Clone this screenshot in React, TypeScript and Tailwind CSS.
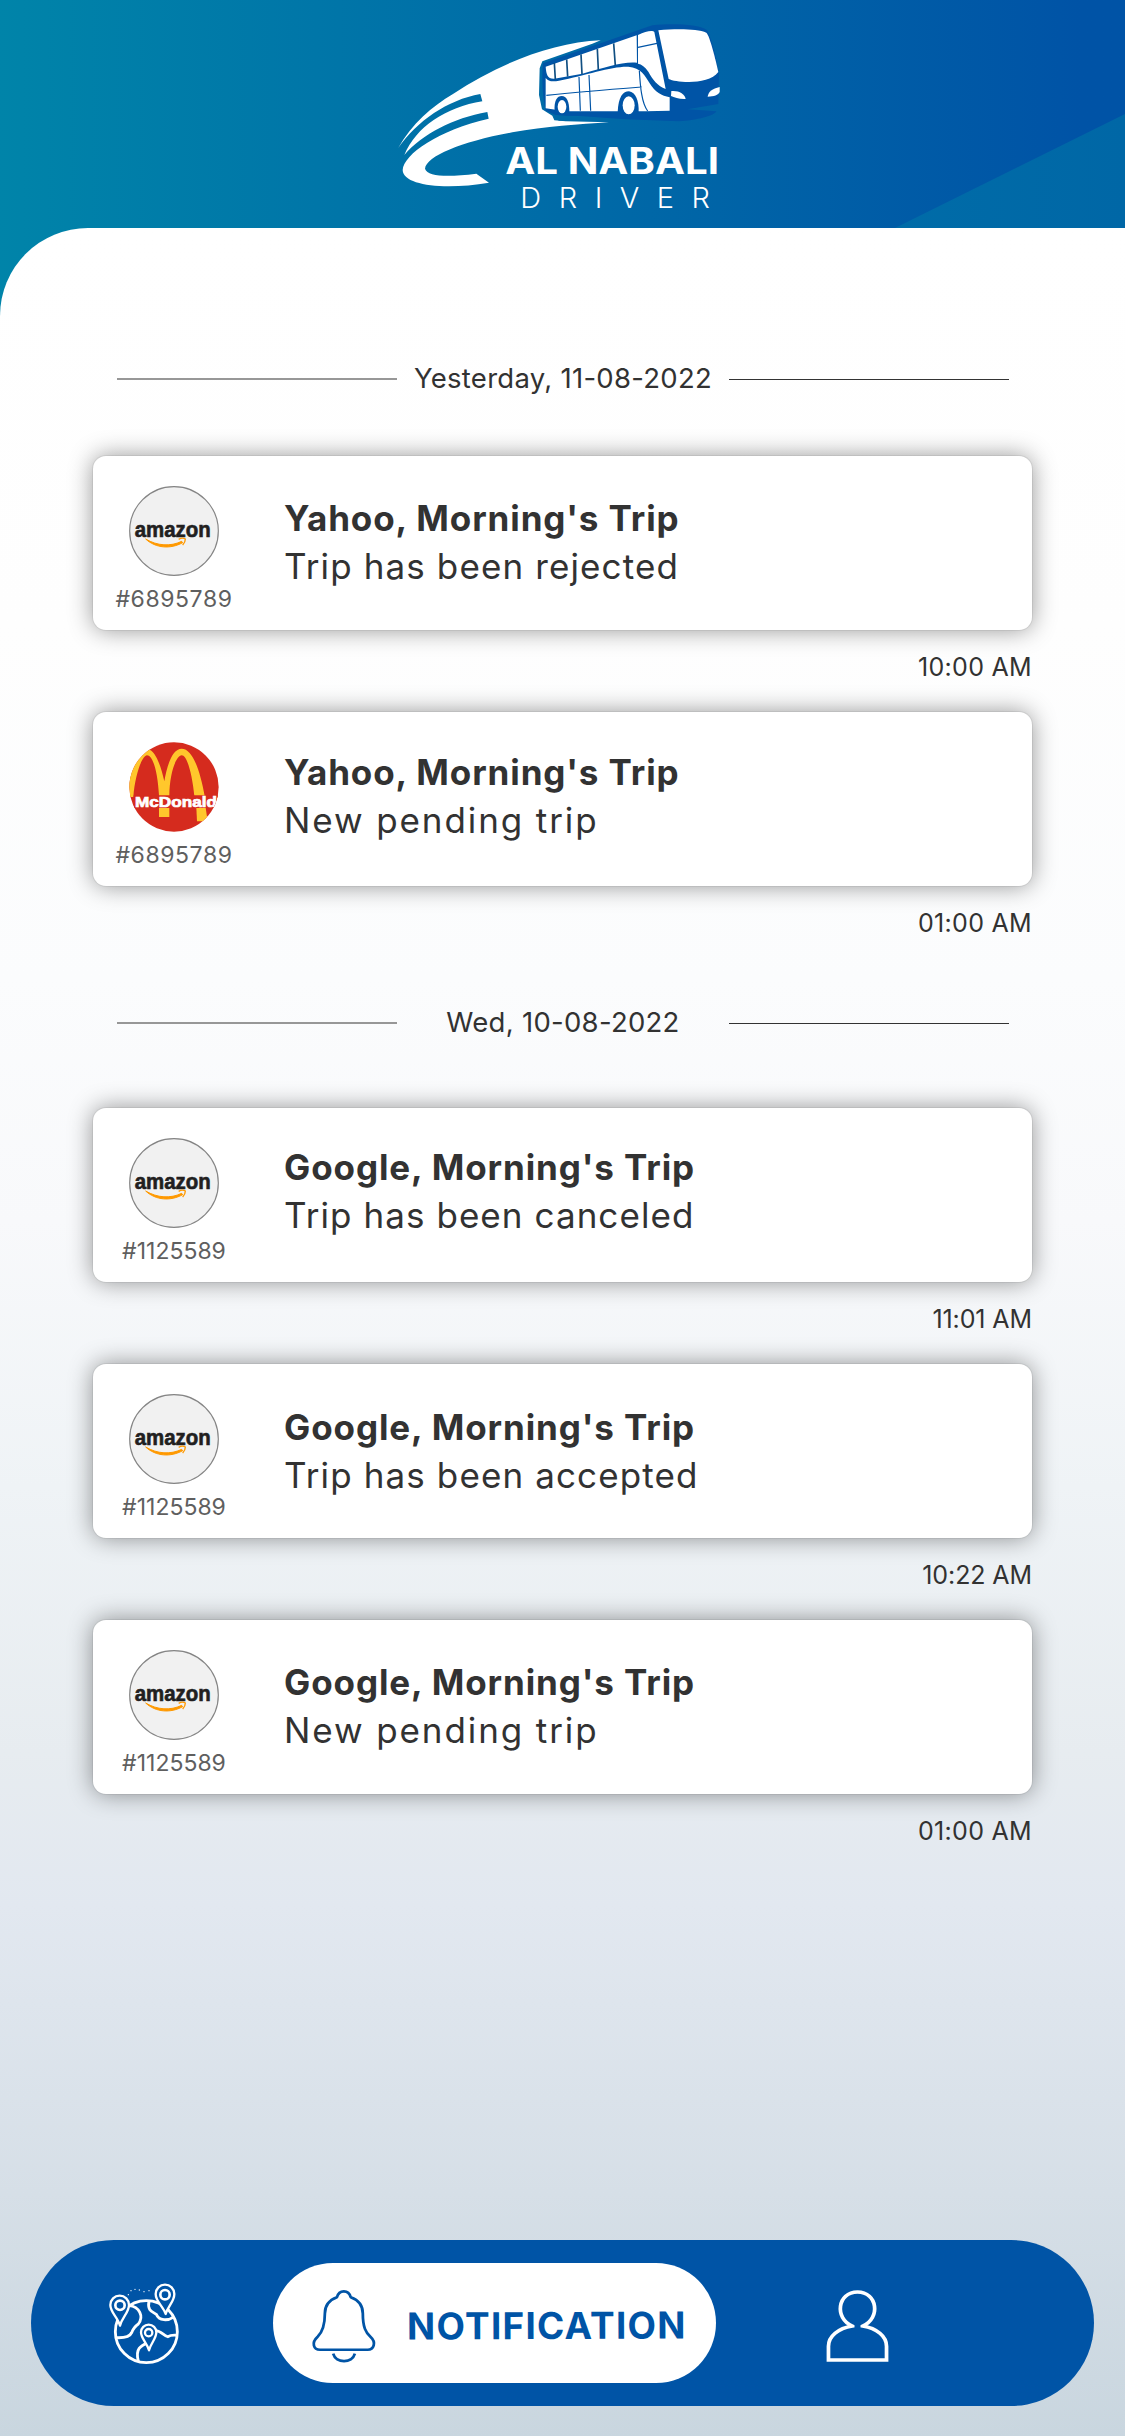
type Brand = "amazon" | "mcdonald";

interface Trip {
  brand: Brand;
  id: string;
  idClass: string;
  company: string;
  message: string;
  messageClass: string;
  padClass: string;
  time: string;
  timeClass: string;
}

const yesterday: Trip[] = [
  {
    brand: "amazon",
    id: "#6895789",
    idClass: "tracking-[0.57px]",
    company: "Yahoo",
    message: "Trip has been rejected",
    messageClass: "tracking-[1.12px]",
    padClass: "pt-[38px]",
    time: "10:00 AM",
    timeClass: "tracking-[0.3px]",
  },
  {
    brand: "mcdonald",
    id: "#6895789",
    idClass: "tracking-[0.57px]",
    company: "Yahoo",
    message: "New pending trip",
    messageClass: "tracking-[1.9px]",
    padClass: "pt-[36px]",
    time: "01:00 AM",
    timeClass: "tracking-[0.3px]",
  },
];

const wednesday: Trip[] = [
  {
    brand: "amazon",
    id: "#1125589",
    idClass: "tracking-normal",
    company: "Google",
    message: "Trip has been canceled",
    messageClass: "tracking-[1.07px]",
    padClass: "pt-[35px]",
    time: "11:01 AM",
    timeClass: "tracking-[-0.1px]",
  },
  {
    brand: "amazon",
    id: "#1125589",
    idClass: "tracking-normal",
    company: "Google",
    message: "Trip has been accepted",
    messageClass: "tracking-[1.12px]",
    padClass: "pt-[39px]",
    time: "10:22 AM",
    timeClass: "tracking-[-0.1px]",
  },
  {
    brand: "amazon",
    id: "#1125589",
    idClass: "tracking-normal",
    company: "Google",
    message: "New pending trip",
    messageClass: "tracking-[1.9px]",
    padClass: "pt-[38px]",
    time: "01:00 AM",
    timeClass: "tracking-[0.3px]",
  },
];

function BusLogo() {
  return (
    <svg viewBox="0 0 1080 684" className="h-[228px] w-[360px]" fill="none">
      {/* speed swoosh */}
      <path
        fill="#fff"
        d="M57 445C98 372 160 318 222 282C360 190 520 128 665 121L640 131L490 184L482 205L480 285L489 328L520 347L526 361L560 364L690 367C600 372 500 380 400 397C250 424 142 468 138 506C146 530 205 532 292 521L330 548C200 570 72 558 71 510C74 462 180 390 329 356L325 336C222 354 130 402 76 465C112 380 200 322 310 304L304 282C205 300 115 362 57 445Z"
      />
      {/* bus shell */}
      <path
        fill="#0054a6"
        d="M492 190L820 76C880 70 955 72 984 90C1000 120 1014 180 1020 222L1018 312L925 328L1012 334C1010 346 950 362 900 364L740 358L600 348L535 347L500 332C490 290 488 230 492 190Z"
      />
      <path d="M532 345L600 352L800 362L540 362L524 352Z" fill="#0069a7" />
      {/* side windows */}
      <path
        fill="#fff"
        d="M500 200L773 106L774 188C730 184 680 202 610 221L526 236C506 237 502 225 500 200Z"
      />
      <path
        d="M526 189L529 238M563 178L566 230M606 163L609 222M655 147L658 210M704 130L709 197"
        stroke="#104f82"
        strokeWidth="5"
      />
      {/* front side pane */}
      <path fill="#fff" d="M777 105C800 94 820 90 826 96L860 267C836 258 820 238 808 215C798 200 788 193 777 191Z" />
      <path d="M777 142L834 130" stroke="#0054a6" strokeWidth="4" />
      {/* lower body */}
      <path
        fill="#fff"
        d="M500 234C508 246 524 245 540 242C620 226 700 198 748 200C786 204 798 226 812 250C828 276 848 288 872 292V332L800 334H560L500 325Z"
      />
      <path
        d="M502 286C600 276 700 268 788 261M600 231L604 332M630 225L635 332M781 212C784 260 788 310 806 333"
        stroke="#0054a6"
        strokeWidth="3.5"
      />
      <path d="M527 336C524 300 535 288 548 288C563 288 571 304 571 336Z" fill="#0054a6" />
      <path d="M716 336C718 290 732 274 750 274C770 276 780 304 779 336Z" fill="#0054a6" />
      <ellipse cx="549" cy="320" rx="13" ry="20" fill="#fff" />
      <ellipse cx="749" cy="316" rx="18" ry="27" fill="#fff" />
      {/* windshield and headlights */}
      <path
        fill="#fff"
        d="M838 91C890 86 955 86 982 98C992 106 1010 180 1018 216C1002 238 962 246 930 246C900 246 880 242 869 237Z"
      />
      <path fill="#fff" d="M877 273C900 271 917 281 920 297C902 298 886 293 876 288Z" />
      <path fill="#fff" d="M1022 261C1000 266 988 275 986 290C1005 290 1018 285 1022 276Z" />
      <text
        x="379"
        y="521"
        fill="#fff"
        fontFamily="Inter, sans-serif"
        fontWeight="700"
        fontSize="110"
        textLength="641"
        lengthAdjust="spacingAndGlyphs"
      >
        AL NABALI
      </text>
      <text
        x="424"
        y="624"
        fill="#fff"
        fontFamily="Inter, sans-serif"
        fontWeight="300"
        fontSize="87"
        textLength="569"
        lengthAdjust="spacing"
      >
        DRIVER
      </text>
    </svg>
  );
}

function AmazonLogo() {
  return (
    <svg viewBox="0 0 270 270" className="h-[90px] w-[90px]" fill="none">
      <circle cx="135" cy="135" r="133" fill="#f1f1f1" stroke="#858585" strokeWidth="3.5" />
      <text
        x="17"
        y="152"
        fill="#221f1f"
        stroke="#221f1f"
        strokeWidth="2"
        fontFamily="Liberation Sans, sans-serif"
        fontWeight="700"
        fontSize="68"
        textLength="228"
        lengthAdjust="spacingAndGlyphs"
      >
        amazon
      </text>
      <path d="M50 159C85 180 125 182 158 166L161 170C125 190 80 187 50 159Z" fill="#f90" stroke="#f90" strokeWidth="3" />
      <path d="M149 160C156 156 164 156 169 159C169 165 166 172 161 177" stroke="#f90" strokeWidth="4" />
    </svg>
  );
}

function McDonaldLogo() {
  return (
    <svg viewBox="0 0 270 270" className="h-[90px] w-[90px]" fill="none">
      <defs>
        <clipPath id="mcd-disc">
          <circle cx="135" cy="135" r="134" />
        </clipPath>
      </defs>
      <g clipPath="url(#mcd-disc)">
        <rect width="270" height="270" fill="#d52b1e" />
        <path
          fill="#ffc72c"
          d="M-8 165C2 70 30 20 57 22C82 26 98 82 106 118C114 70 130 20 158 20C192 20 214 90 227 162H196C190 100 175 40 158 40C140 42 122 95 121 160V225H90V160C86 90 72 40 54 40C38 42 18 100 13 165Z"
        />
        <path fill="#ffc72c" d="M202 197H230L236 238H204Z" />
        <path fill="#d52b1e" d="M14 160H270V198H14Z" />
        <text
          x="18"
          y="194"
          fill="#fff"
          stroke="#fff"
          strokeWidth="2"
          fontFamily="Liberation Sans, sans-serif"
          fontWeight="700"
          fontSize="43"
          textLength="246"
          lengthAdjust="spacingAndGlyphs"
        >
          McDonald
        </text>
      </g>
    </svg>
  );
}

function DateDivider({ label }: { label: string }) {
  return (
    <div className="flex h-[34px] items-center justify-between pr-[116px] pl-[117px]">
      <div className="mt-[2px] h-[2px] w-[280px] bg-[#979797]" />
      <span className="text-[27.5px] leading-[34px] tracking-[0.28px] whitespace-nowrap">{label}</span>
      <div className="mt-[3px] h-px w-[280px] bg-[#333]" />
    </div>
  );
}

function TripCard({ trip }: { trip: Trip }) {
  return (
    <article className="mr-[93px] mb-[30px] ml-[93px] w-[939px]">
      <div className="flex h-[174px] rounded-[13px] bg-white shadow-[0_0_0_1px_rgba(0,0,0,0.06),0_0_25px_rgba(0,0,0,0.42)]">
        <div className="flex w-[162px] flex-col items-center pt-[30px]">
          {trip.brand === "amazon" ? <AmazonLogo /> : <McDonaldLogo />}
          <span className={`mt-[11px] text-[23px] leading-6 text-[#5f5f5f] ${trip.idClass}`}>{trip.id}</span>
        </div>
        <div className={`ml-[29px] text-[35px] leading-[48px] whitespace-nowrap ${trip.padClass}`}>
          <h2 className="font-bold tracking-[0.9px]">{trip.company}, Morning's Trip</h2>
          <p className={trip.messageClass}>{trip.message}</p>
        </div>
      </div>
      <p className={`mt-[22px] text-right text-[25px] leading-[30px] ${trip.timeClass}`}>{trip.time}</p>
    </article>
  );
}

function GlobeIcon() {
  return (
    <svg viewBox="0 0 270 330" className="h-[110px] w-[90px]" fill="none" stroke="#fff" strokeWidth="8.5">
      <circle cx="142" cy="185" r="93" />
      <path d="M90 107C122 110 135 140 118 162C105 170 102 178 98 188C92 202 74 204 52 203" />
      <path d="M150 94C144 122 160 125 172 133C180 154 208 152 222 142" />
      <path d="M170 182C186 182 194 198 206 200C216 194 224 195 236 196" />
      <path d="M150 216C124 228 108 236 118 274" />
      <g fill="#0054a6" strokeWidth="7">
        <path d="M63 167C56 140 34 128 34 105A28 28 0 0 1 90 105C90 128 70 140 63 167Z" strokeLinejoin="round" />
        <circle cx="63" cy="106" r="14" strokeWidth="8" />
        <path d="M200 132C192 108 170 95 170 72A28 28 0 0 1 226 72C226 95 207 108 200 132Z" strokeLinejoin="round" />
        <circle cx="198" cy="74" r="14" strokeWidth="8" />
        <path d="M150 241C145 220 126 206 126 187A23 23 0 0 1 172 187C172 206 155 220 150 241Z" strokeLinejoin="round" />
        <circle cx="149" cy="188" r="11" strokeWidth="7" />
      </g>
      <g fill="#fff" stroke="none">
        <circle cx="88" cy="74" r="2" />
        <circle cx="96" cy="62" r="2" />
        <circle cx="108" cy="58" r="2" />
        <circle cx="121" cy="60" r="2" />
        <circle cx="135" cy="65" r="2" />
        <circle cx="150" cy="62" r="2" />
      </g>
    </svg>
  );
}

function BellIcon() {
  return (
    <svg
      viewBox="840 200 200 235"
      preserveAspectRatio="none"
      className="h-[78px] w-[69px]"
      fill="none"
      stroke="#0054a6"
      strokeWidth="8"
      strokeLinejoin="round"
    >
      <path d="M921 231C927 207 955 207 961 231C988 241 996 258 996 280C996 322 1005 338 1018 350C1036 367 1028 389 1010 389H872C853 389 846 368 865 350C879 336 886 315 886 280C886 258 894 241 921 231Z" />
      <path d="M910 401C918 431 965 431 973 401" />
    </svg>
  );
}

function PersonIcon() {
  return (
    <svg
      viewBox="760 205 180 228"
      preserveAspectRatio="none"
      className="h-[76px] w-[67px]"
      fill="none"
      stroke="#fff"
      strokeWidth="10"
    >
      <path d="M836 319C787 296 796 217 850 217C904 217 913 296 864 319C902 326 928 350 928 380V421H772V380C772 350 798 326 836 319Z" />
      <path d="M842 319.500H858" stroke="#0054a6" strokeWidth="14" />
    </svg>
  );
}

export default function App() {
  return (
    <div className="flex h-[2436px] w-[1125px] flex-col overflow-hidden bg-linear-to-r from-[#0084a9] from-0% via-[#006ba7] via-50% to-[#0053a6] to-96% font-[Inter,sans-serif] text-[#323232]">
      <header className="relative h-[228px] shrink-0 pl-[379px]">
        <svg viewBox="0 0 230 114" className="absolute right-0 bottom-0 h-[114px] w-[230px]">
          <defs>
            <linearGradient id="wedge" x1="0" x2="1">
              <stop offset="0" stopColor="#006ca8" />
              <stop offset="1" stopColor="#0067a6" />
            </linearGradient>
          </defs>
          <path d="M0 114L230 0V114Z" fill="url(#wedge)" />
        </svg>
        <div className="relative">
          <BusLogo />
        </div>
      </header>

      <main className="flex flex-1 flex-col rounded-tl-[88px] bg-[linear-gradient(180deg,#fff_0%,#fefefe_18%,#fbfcfd_34%,#f8f9fb_45%,#eff3f6_57%,#e7ecf0_69%,#e2e8f0_76%,#d6dfe7_89%,#c9d6df_100%)] pt-[133px]">
        <section>
          <DateDivider label="Yesterday, 11-08-2022" />
          <div className="pt-[61px]">
            {yesterday.map((trip, i) => (
              <TripCard key={i} trip={trip} />
            ))}
          </div>
        </section>
        <section className="pt-[37px]">
          <DateDivider label="Wed, 10-08-2022" />
          <div className="pt-[69px]">
            {wednesday.map((trip, i) => (
              <TripCard key={i} trip={trip} />
            ))}
          </div>
        </section>

        <nav className="mt-auto mb-[30px] ml-[31px] flex h-[166px] w-[1063px] items-center rounded-full bg-[#0054a6]">
          <div className="mt-1 ml-[68px]">
            <GlobeIcon />
          </div>
          <div className="ml-[84px] flex h-[120px] w-[443px] items-center rounded-full bg-white pl-[36px] text-[#0054a6]">
            <div className="mt-[6px]">
              <BellIcon />
            </div>
            <span className="mt-[5px] ml-[29px] rotate-[-0.25deg] text-[37px] font-bold tracking-[1.2px]">
              NOTIFICATION
            </span>
          </div>
          <div className="mt-[6px] ml-[108px]">
            <PersonIcon />
          </div>
        </nav>
      </main>
    </div>
  );
}
